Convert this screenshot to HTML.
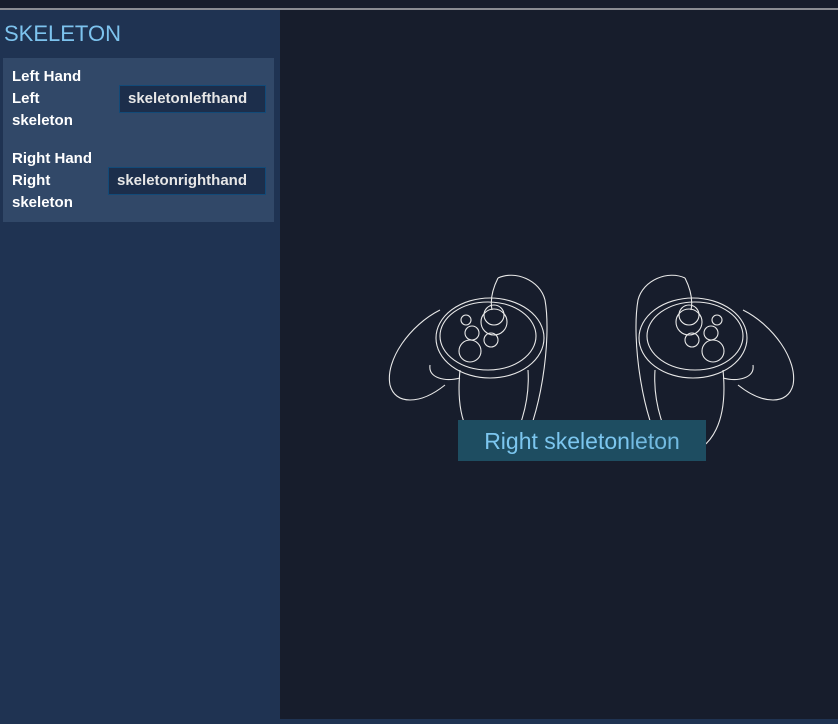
<!DOCTYPE html>
<html><head><style>
body{margin:0;width:838px;height:724px;background:#1f3352;position:relative;overflow:hidden;font-family:"Liberation Sans","DejaVu Sans",sans-serif}
.top{position:absolute;left:0;top:0;width:838px;height:8px;background:#171d2c}
.line{position:absolute;left:0;top:8px;width:838px;height:2px;background:#8a8c92}
.right{position:absolute;left:280px;top:10px;width:558px;height:709px;background:#171d2c}
.h{position:absolute;left:4px;top:21px;color:#7dc3ee;font-size:22px}
.panel{position:absolute;left:3px;top:58px;width:271px;height:164px;background:#314868}
.lbl{position:absolute;left:9px;color:#fff;font-weight:bold;font-size:15px;line-height:22px}
.btn{position:absolute;right:8px;height:28px;background:#1c2e4b;border:1px solid #124a78;color:#e6e6e6;font-weight:bold;font-size:15px;line-height:26px;padding:0 8px;box-sizing:border-box}
.tip{position:absolute;left:458px;top:420px;width:248px;height:41px;background:#1e4d61;color:#7cc6ef;font-size:23px;line-height:43px;text-align:center}
</style></head><body>
<div class="top"></div><div class="line"></div>
<div class="right"></div>
<div class="h">SKELETON</div>
<div class="panel">
<div class="lbl" style="top:8px">Left Hand<br>Left<br>skeleton</div>
<div class="btn" style="top:27px;width:147px">skeletonlefthand</div>
<div class="lbl" style="top:90px">Right Hand<br>Right<br>skeleton</div>
<div class="btn" style="top:109px;width:158px">skeletonrighthand</div>
</div>
<svg style="position:absolute;left:0;top:0" width="838" height="724" fill="none" stroke="#e8e8e8" stroke-width="1.1">
<g id="L">
<path d="M498 278 C515 270 540 280 545 300 C552 340 540 420 520 450 M498 278 C492 290 490 300 492 310"/>
<path d="M460 370 C455 420 470 450 500 455 C520 440 530 400 528 370"/>
<path d="M440 310 C410 325 385 360 390 385 C395 405 420 405 445 385"/>
<ellipse cx="490" cy="338" rx="54" ry="40"/>
<ellipse cx="488" cy="336" rx="48" ry="34"/>
<circle cx="494" cy="315" r="10"/><circle cx="494" cy="322" r="13"/>
<circle cx="466" cy="320" r="5"/><circle cx="472" cy="333" r="7"/><circle cx="491" cy="340" r="7"/><circle cx="470" cy="351" r="11"/>
<path d="M430 365 C428 378 445 382 460 378"/>
</g>
<g transform="translate(1183,0) scale(-1,1)">
<path d="M498 278 C515 270 540 280 545 300 C552 340 540 420 520 450 M498 278 C492 290 490 300 492 310"/>
<path d="M460 370 C455 420 470 450 500 455 C520 440 530 400 528 370"/>
<path d="M440 310 C410 325 385 360 390 385 C395 405 420 405 445 385"/>
<ellipse cx="490" cy="338" rx="54" ry="40"/>
<ellipse cx="488" cy="336" rx="48" ry="34"/>
<circle cx="494" cy="315" r="10"/><circle cx="494" cy="322" r="13"/>
<circle cx="466" cy="320" r="5"/><circle cx="472" cy="333" r="7"/><circle cx="491" cy="340" r="7"/><circle cx="470" cy="351" r="11"/>
<path d="M430 365 C428 378 445 382 460 378"/>
</g>
</svg>
<div class="tip">Right skeleton<span style="opacity:.9">leton</span></div>
</body></html>
